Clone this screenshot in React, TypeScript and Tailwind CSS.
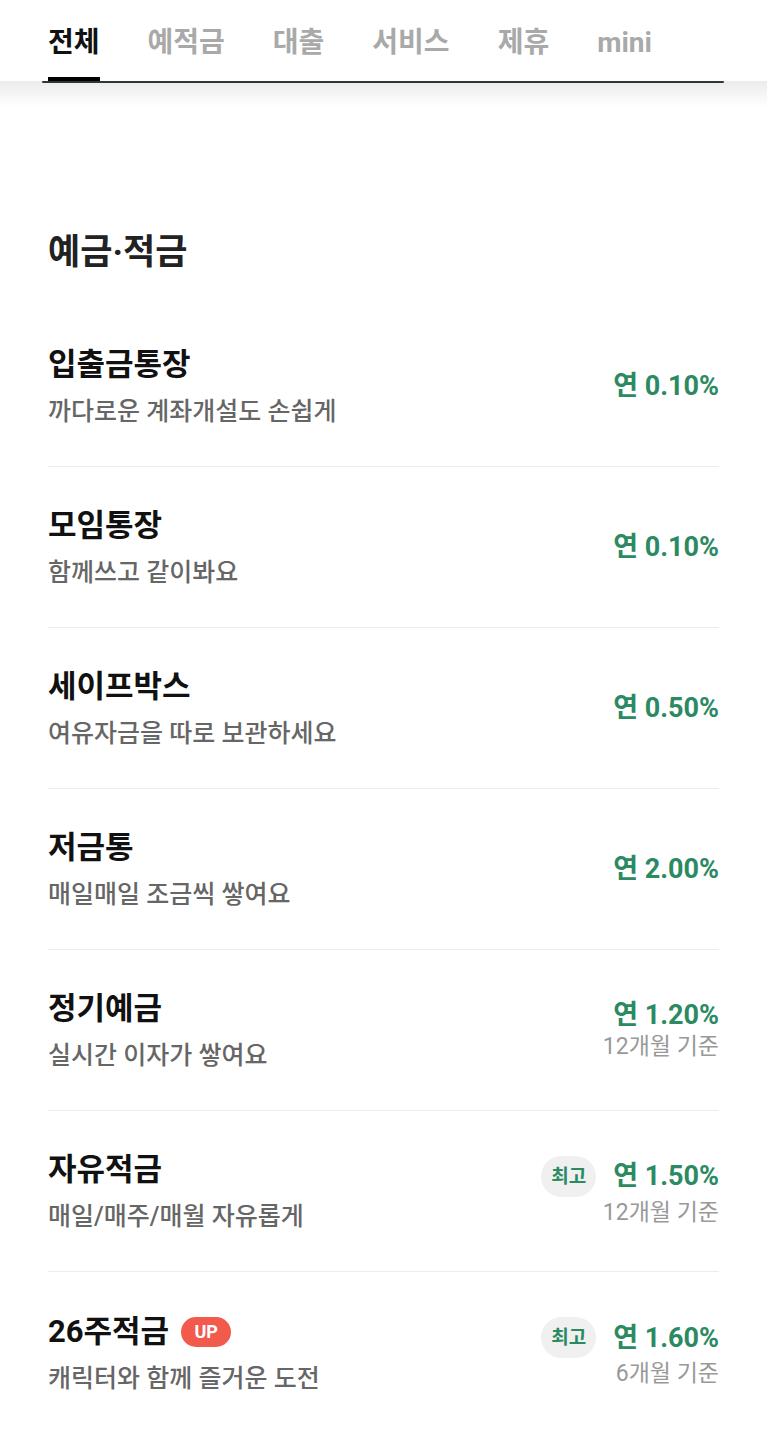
import React from "react";

type Item = {
  title: string;
  sub: string;
  rate: string;
  basis?: string;
  best?: boolean;
  up?: boolean;
};

const items: Item[] = [
  { title: "입출금통장", sub: "까다로운 계좌개설도 손쉽게", rate: "연 0.10%" },
  { title: "모임통장", sub: "함께쓰고 같이봐요", rate: "연 0.10%" },
  { title: "세이프박스", sub: "여유자금을 따로 보관하세요", rate: "연 0.50%" },
  { title: "저금통", sub: "매일매일 조금씩 쌓여요", rate: "연 2.00%" },
  { title: "정기예금", sub: "실시간 이자가 쌓여요", rate: "연 1.20%", basis: "12개월 기준" },
  { title: "자유적금", sub: "매일/매주/매월 자유롭게", rate: "연 1.50%", basis: "12개월 기준", best: true },
  { title: "26주적금", sub: "캐릭터와 함께 즐거운 도전", rate: "연 1.60%", basis: "6개월 기준", best: true, up: true },
];

const tabs = ["전체", "예적금", "대출", "서비스", "제휴", "mini"];

export default function App() {
  return (
    <div className="min-h-[1439px] w-[767px] bg-white font-['Roboto','Noto_Sans_CJK_KR',sans-serif]">
      <div className="flex h-[81px] items-stretch gap-[48px] bg-white px-[48px]">
        {tabs.map((t, i) => (
          <div
            key={t}
            className={
              i === 0
                ? "flex items-center border-b-[4px] border-black pt-[8px] text-[28px] font-bold leading-none text-[#111]"
                : "flex items-center border-b-[4px] border-transparent pt-[8px] text-[28px] font-bold leading-none text-[#a9a9a9]"
            }
          >
            {t}
          </div>
        ))}
      </div>
      <div className="h-[26px] bg-gradient-to-b from-[#ebebeb] to-white">
        <div className="ml-[42px] mr-[43px] h-[2px] rounded-full bg-[#2d3639]" />
      </div>

      <div className="px-[48px]">
        <h2 className="mt-[124px] text-[35px] font-bold leading-[44px] text-[#222]">예금·적금</h2>
        <div className="mt-[31px]">
          {items.map((it) => (
            <div
              key={it.title}
              className="flex h-[161px] items-center justify-between border-b border-[#ececec] last:border-b-0"
            >
              <div className="flex flex-col">
                <div className="flex items-center gap-[12px]">
                  <span className="text-[31px] font-bold leading-[40px] text-[#111]">{it.title}</span>
                  {it.up && (
                    <span className="flex h-[30px] w-[50px] items-center justify-center rounded-full bg-[#f25a4c] text-[18px] font-bold leading-none text-white">
                      UP
                    </span>
                  )}
                </div>
                <span className="mt-[12px] text-[25px] font-medium leading-[30px] text-[#666]">{it.sub}</span>
              </div>
              <div className="flex flex-col items-end">
                <div className="flex items-center gap-[17px]">
                  {it.best && (
                    <span className="flex h-[41px] w-[55px] items-center justify-center rounded-full bg-[#f0f0f0] text-[19px] font-bold leading-none text-[#2b8a62]">
                      최고
                    </span>
                  )}
                  <span className="text-[27px] font-bold leading-[32px] text-[#2b8a62]">{it.rate}</span>
                </div>
                {it.basis && (
                  <span className="mt-[2px] text-[23px] leading-[28px] text-[#999]">{it.basis}</span>
                )}
              </div>
            </div>
          ))}
        </div>
      </div>
    </div>
  );
}
